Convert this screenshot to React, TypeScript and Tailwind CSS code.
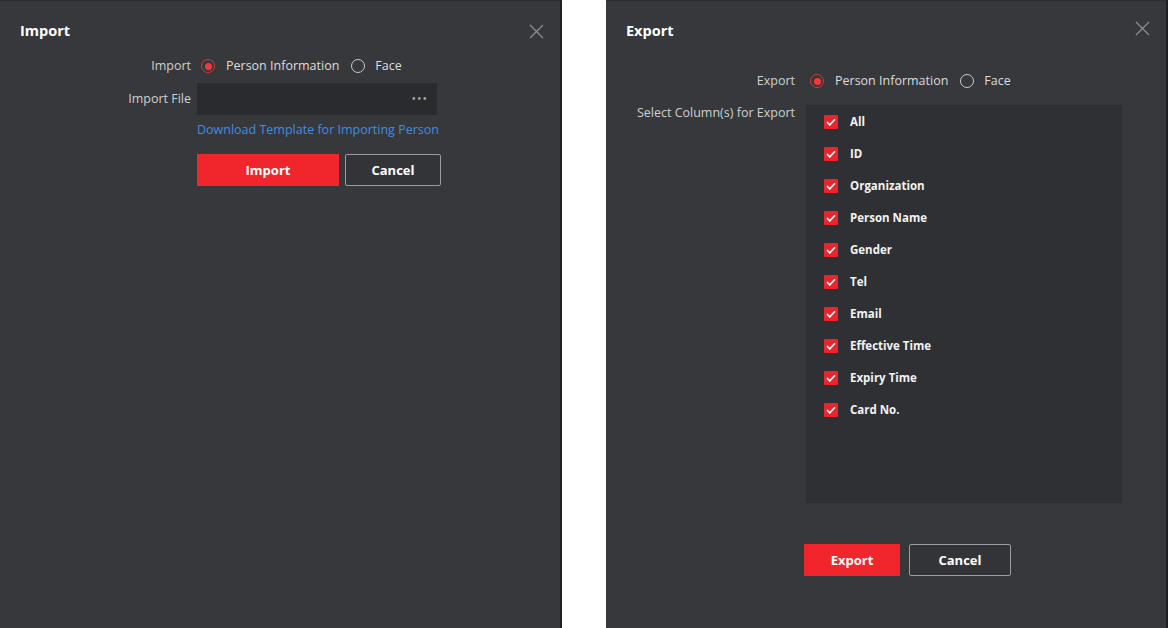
import React from "react";

const CloseIcon = () => (
  <svg width="15" height="15" viewBox="0 0 15 15" fill="none">
    <path d="M1 1 L14 14 M14 1 L1 14" stroke="#8e8f93" strokeWidth="1.2" />
  </svg>
);

const Radio = ({ checked }: { checked?: boolean }) =>
  checked ? (
    <span className="flex h-[14px] w-[14px] items-center justify-center rounded-full border-[1.5px] border-[#d8363a]">
      <span className="block h-[7px] w-[7px] rounded-full bg-[#ee3b3e]" />
    </span>
  ) : (
    <span className="block h-[14px] w-[14px] rounded-full border border-[#c9cacc]" />
  );

const Check = () => (
  <span className="flex h-[14px] w-[14px] items-center justify-center rounded-[1px] bg-[#e8262e]">
    <svg width="10" height="8" viewBox="0 0 10 8" fill="none">
      <path d="M1 4.2 L3.8 6.8 L9 1.2" stroke="white" strokeWidth="1.6" />
    </svg>
  </span>
);

const RadioGroup = () => (
  <div className="flex items-center pt-[2px] text-[12.5px] text-[#dcdcdc]">
    <span className="ml-[4px]"><Radio checked /></span>
    <span className="ml-[11px]">Person Information</span>
    <span className="ml-[12px]"><Radio /></span>
    <span className="ml-[10px]">Face</span>
  </div>
);

const ImportDialog = () => (
  <div className="flex h-full w-[562px] shrink-0 flex-col border-r-2 border-t border-r-[#1d1f20] border-t-[#2c2d31] bg-[#37383c]">
    <div className="flex h-[53px] items-start justify-between pl-5 pr-[16px] pt-[20px]">
      <span className="text-[14.5px] font-bold leading-[20px] text-white">Import</span>
      <span className="mt-[3px]"><CloseIcon /></span>
    </div>
    <div className="grid grid-cols-[191px_auto] items-center gap-x-[6px]">
      <div className="h-[22px] pt-[1px] text-right text-[12.5px] leading-[22px] text-[#cfcfcf]">Import</div>
      <RadioGroup />
      <div className="mt-[7px] pt-[1px] text-right text-[12.5px] text-[#cfcfcf]">Import File</div>
      <div className="mt-[7px] flex h-[32px] w-[240px] items-center justify-end bg-[#2a2b2f] pr-[9px] text-[12px] leading-none tracking-[1px] text-[#a8a8a8]">
        •••
      </div>
      <div />
      <div className="mt-[5px] text-[12.5px] leading-[20px] text-[#3f8de0]">Download Template for Importing Person</div>
      <div />
      <div className="mt-[14px] flex gap-[6px]">
        <button className="h-[32px] w-[142px] bg-[#f0262c] pt-[1px] text-[13px] font-bold text-white">Import</button>
        <button className="h-[32px] w-[96px] rounded-[2px] border border-[#9c9da0] bg-[#333438] pt-[1px] text-[13px] font-bold text-white">Cancel</button>
      </div>
    </div>
  </div>
);

const columns = ["All", "ID", "Organization", "Person Name", "Gender", "Tel", "Email", "Effective Time", "Expiry Time", "Card No."];

const ExportDialog = () => (
  <div className="flex h-full w-[562px] shrink-0 flex-col border-r-2 border-t border-r-[#1f2023] border-t-[#2c2d31] bg-[#37383c]">
    <div className="flex h-[68px] items-start justify-between pl-5 pr-[16px] pt-[20px]">
      <span className="text-[14.5px] font-bold leading-[20px] text-white">Export</span>
      <span className="mt-[0px]"><CloseIcon /></span>
    </div>
    <div className="grid grid-cols-[189px_auto] items-start gap-x-[11px]">
      <div className="h-[22px] pt-[1px] text-right text-[12.5px] leading-[22px] text-[#cfcfcf]">Export</div>
      <div className="flex h-[22px] items-center">
        <RadioGroup />
      </div>
      <div className="mt-[14px] text-right text-[12.5px] leading-[16px] text-[#cfcfcf]">Select Column(s) for Export</div>
      <div className="mt-[14px] h-[398px] w-[316px] bg-[#2f3034] pl-[18px] pt-[1px]">
        {columns.map((c) => (
          <div key={c} className="flex h-[32px] items-center gap-[12px]">
            <Check />
            <span className="text-[11.5px] font-bold text-[#f2f2f2]">{c}</span>
          </div>
        ))}
      </div>
    </div>
    <div className="ml-[198px] mt-[41px] flex gap-[9px]">
      <button className="h-[32px] w-[96px] bg-[#f0262c] pt-[1px] text-[13px] font-bold text-white">Export</button>
      <button className="h-[32px] w-[102px] rounded-[2px] border border-[#9c9da0] bg-[#333438] pt-[1px] text-[13px] font-bold text-white">Cancel</button>
    </div>
  </div>
);

export default function App() {
  return (
    <div className="flex h-[628px] w-[1168px] overflow-hidden bg-white font-['Open_Sans',sans-serif]">
      <ImportDialog />
      <div className="w-[44px] shrink-0" />
      <ExportDialog />
    </div>
  );
}
